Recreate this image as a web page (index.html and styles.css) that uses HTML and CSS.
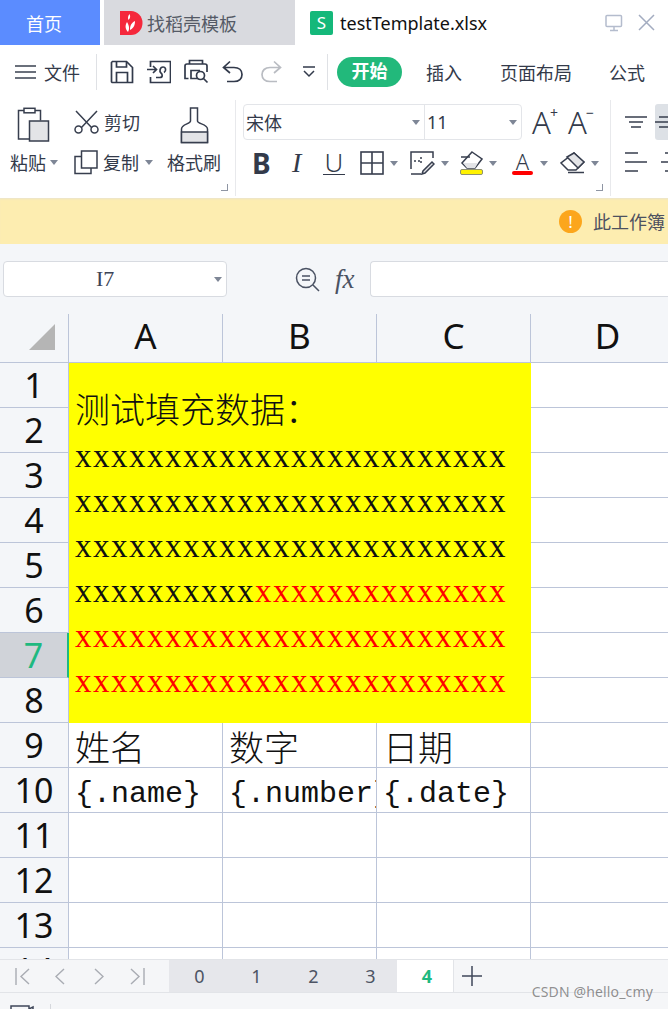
FILE: index.html
```html
<!DOCTYPE html>
<html>
<head>
  <meta charset="utf-8">
  <link rel="stylesheet" href="styles.css">
</head>
<body>
  <div class="app">

    <!-- Window tabs -->
    <div class="titlebar">
      <div class="tab-home">首页</div>
      <div class="tab-docer">
        <svg class="logo" width="23" height="24" viewBox="0 0 23 24"><path d="M0 0h11a11.500 12 0 0 1 0 24H0z" fill="#f5283c"/><path d="M8 21c-3-3-3-7-1-10 2 3 3 7 1 10zM10 19c0-4 1-7 5-9 0 4-1 7-5 9zM8.500 9c-1-2-.5-4 1-6 1 2 1 4-1 6z" fill="#fff"/></svg>
        <span>找稻壳模板</span>
      </div>
      <div class="tab-file">
        <div class="sheet-logo">S</div>
        <span>testTemplate.xlsx</span>
        <svg class="win-btn monitor" width="18" height="18" viewBox="0 0 18 18" fill="none" stroke="#b4bccd" stroke-width="1.500"><rect x="1" y="1.500" width="15.500" height="11" rx="1"/><path d="M9 12.500v4M5 16.500h8"/></svg>
        <svg class="win-btn" width="17" height="17" viewBox="0 0 17 17" fill="none" stroke="#a3acc0" stroke-width="1.500"><path d="M1 1l15 15M16 1L1 16"/></svg>
      </div>
    </div>

    <!-- Menu row -->
    <div class="menubar">
      <svg class="hamburger" width="21" height="14" viewBox="0 0 21 14" fill="none" stroke="#3a4150" stroke-width="1.500"><path d="M0 1h21M0 7h21M0 13h21"/></svg>
      <span class="menu-file">文件</span>
      <div class="vline"></div>
      <svg class="qa save" width="24" height="24" viewBox="0 0 24 24" fill="none" stroke="#323a4b" stroke-width="1.700"><path d="M2.500 1.500h14l6 6v15h-20a1 1 0 0 1-1-1v-19z"/><path d="M6.500 1.500v5.500h10V2M6.500 22.500v-10h11v10"/></svg>
      <svg class="qa share" width="24" height="24" viewBox="0 0 24 24" fill="none" stroke="#323a4b" stroke-width="1.700"><path d="M3.500 7V1.500h20v21h-20V17"/><path d="M0 9.500h9M6 6l3.500 3.500L6 13"/><path d="M9 17.500h4c3 0 2.500-3.500 1-4.500-2-1.500-1-6 2-6s3.500 4 1 5.500"/></svg>
      <svg class="qa preview" width="25" height="25" viewBox="0 0 25 25" fill="none" stroke="#323a4b" stroke-width="1.700"><path d="M5.500 5V1.500h13V5M4.500 19.500H1V7a2 2 0 0 1 2-2h18a2 2 0 0 1 2 2v6"/><path d="M14 19.500H7v-8h9"/><circle cx="16.500" cy="16.500" r="4"/><path d="M19.500 19.500l4 4"/></svg>
      <svg class="qa undo" width="21" height="24" viewBox="0 0 21 24" fill="none" stroke="#323a4b" stroke-width="1.700"><path d="M8 1.500L1.500 7.500 8 13M1.500 7.500H12c5 0 8 3 8 7s-3 7-8 7H5"/></svg>
      <svg class="qa redo" width="21" height="24" viewBox="0 0 21 24" fill="none" stroke="#b9bcc2" stroke-width="1.700"><path d="M13 1.500l6.500 6L13 13M19.500 7.500H9c-5 0-8 3-8 7s3 7 8 7h7"/></svg>
      <svg class="qa more" width="12" height="12" viewBox="0 0 12 12" fill="none" stroke="#323a4b" stroke-width="1.500"><path d="M0 1h12M1 5l5 5 5-5"/></svg>
      <div class="vline second"></div>
      <span class="pill">开始</span>
      <span class="menu-item insert">插入</span>
      <span class="menu-item layout">页面布局</span>
      <span class="menu-item formula">公式</span>
    </div>

    <!-- Ribbon -->
    <div class="ribbon">
      <div class="group group-clip">
        <div class="col paste">
          <svg width="33" height="36" viewBox="0 0 33 36" fill="none" stroke="#373e4e" stroke-width="1.500"><path d="M12 31.500H1.500V3h22v10"/><rect x="7" y="0.800" width="11" height="4.500" fill="#fff"/><rect x="12.500" y="13.500" width="19" height="20" fill="#e3e4e7"/></svg>
          <div class="label">粘贴<i class="caret"></i></div>
        </div>
        <div class="col cutcopy">
          <div class="tool">
            <svg width="25" height="24" viewBox="0 0 25 24" fill="none" stroke="#373e4e" stroke-width="1.500"><path d="M2 1l16 17M23 1L7 18"/><circle cx="4.500" cy="19.500" r="3.500"/><circle cx="20.500" cy="19.500" r="3.500"/></svg>
            <span>剪切</span>
          </div>
          <div class="tool">
            <svg width="24" height="25" viewBox="0 0 24 25" fill="none" stroke="#373e4e" stroke-width="1.500"><path d="M7.500 6.500h-6.500v17h16v-6"/><path d="M7.500 1h15.500v17h-15.500z" fill="#fff"/></svg>
            <span>复制</span><i class="caret"></i>
          </div>
        </div>
        <div class="col brush">
          <svg width="29" height="37" viewBox="0 0 29 37" fill="none" stroke="#373e4e" stroke-width="1.500"><path d="M10.500 1h7v13c0 3 10 3 10 8v13.500H1.500V22c0-5 9-5 9-8z"/><path d="M1.500 25h26v10.500h-26z" fill="#e3e4e7"/></svg>
          <div class="label">格式刷</div>
        </div>
        <i class="corner"></i>
      </div>

      <div class="group group-font">
        <div class="font-row">
          <div class="selects">
            <div class="select font-name"><span>宋体</span><i class="caret"></i></div>
            <div class="select font-size"><span>11</span><i class="caret"></i></div>
          </div>
          <div class="grow-a">A<sup>+</sup></div>
          <div class="grow-a shrink">A<sup>−</sup></div>
        </div>
        <div class="fmt-row">
          <div class="fmt fmt-b">B</div>
          <div class="fmt fmt-i">I</div>
          <div class="fmt fmt-u"><span>U</span></div>
          <div class="fmt">
            <svg width="24" height="24" viewBox="0 0 24 24" fill="none" stroke="#373e4e" stroke-width="1.600"><rect x="1" y="1" width="22" height="22"/><path d="M12 1v22M1 12h22"/></svg>
            <i class="caret"></i>
          </div>
          <div class="fmt">
            <svg width="25" height="24" viewBox="0 0 25 24" fill="none" stroke="#373e4e" stroke-width="1.500"><path d="M1 18V1h22v6M1 23h10"/><path d="M4 10h8M11 6v8" stroke-dasharray="2 2"/><path d="M13 20l-1 3 3-1 9-9-2-2z" fill="#e3e4e7"/></svg>
            <i class="caret"></i>
          </div>
          <div class="fmt">
            <div class="fill-icon">
              <svg width="23" height="18" viewBox="0 0 23 18" fill="none" stroke="#373e4e" stroke-width="1.500"><path d="M12 1l10 7-7 9H7L2 12z" fill="#fff"/><path d="M3 12l15 0-3 5H7z" fill="#e3e4e7" stroke="none"/><path d="M1 6h9"/></svg>
              <div class="fill-bar"></div>
            </div>
            <i class="caret"></i>
          </div>
          <div class="fmt">
            <div class="color-a"><span>A</span><div class="color-bar"></div></div>
            <i class="caret"></i>
          </div>
          <div class="fmt">
            <svg width="25" height="22" viewBox="0 0 25 22" fill="none" stroke="#373e4e" stroke-width="1.500"><path d="M14 1l10 9-8 8H8l-7-7z"/><path d="M7 5l11 11 6-6-10-9z" fill="#e3e4e7"/><path d="M8 20.500h16"/></svg>
            <i class="caret"></i>
          </div>
        </div>
        <i class="corner"></i>
      </div>

      <div class="group group-align">
        <div class="align-row">
          <svg width="22" height="12" viewBox="0 0 22 12" fill="none" stroke="#373e4e" stroke-width="1.500"><path d="M0 1h22M4 6h14M6 11h10"/></svg>
          <div class="align-active">
            <svg width="13" height="12" viewBox="0 0 13 12" fill="none" stroke="#373e4e" stroke-width="1.500"><path d="M4 1h9M0 6h13M4 11h9"/></svg>
          </div>
        </div>
        <div class="align-row second">
          <svg width="22" height="20" viewBox="0 0 22 20" fill="none" stroke="#373e4e" stroke-width="1.500"><path d="M0 1h13M0 10h22M0 19h13"/></svg>
          <svg class="align-center" width="8" height="20" viewBox="0 0 8 20" fill="none" stroke="#373e4e" stroke-width="1.500"><path d="M4 1h4M0 10h8M4 19h4"/></svg>
        </div>
      </div>
    </div>

    <!-- Notice -->
    <div class="notice">
      <div class="warn">!</div>
      <span>此工作簿</span>
    </div>

    <!-- Name box and formula input -->
    <div class="formula-bar">
      <div class="name-box"><span>I7</span><i class="caret"></i></div>
      <svg class="zoom-icon" width="25" height="25" viewBox="0 0 25 25" fill="none" stroke="#4a5263" stroke-width="1.500"><circle cx="11" cy="11" r="9.500"/><path d="M7 9h8M7 13h8M18 18l6 6"/></svg>
      <span class="fx">fx</span>
      <div class="formula-input"></div>
    </div>

    <!-- Sheet -->
    <div class="sheet">
      <div class="corner-cell"><i class="select-all"></i></div>
      <div class="col-head">A</div>
      <div class="col-head">B</div>
      <div class="col-head">C</div>
      <div class="col-head">D</div>

      <div class="row-head">1</div>
      <div class="merged">
        <div class="merged-title">测试填充数据：</div>
        <div class="x-line">xxxxxxxxxxxxxxxxxxxxxxxx</div>
        <div class="x-line">xxxxxxxxxxxxxxxxxxxxxxxx</div>
        <div class="x-line">xxxxxxxxxxxxxxxxxxxxxxxx</div>
        <div class="x-line">xxxxxxxxxx<span class="red">xxxxxxxxxxxxxx</span></div>
        <div class="x-line red">xxxxxxxxxxxxxxxxxxxxxxxx</div>
        <div class="x-line red">xxxxxxxxxxxxxxxxxxxxxxxx</div>
      </div>
      <div class="cell"></div>

      <div class="row-head">2</div><div class="cell"></div>
      <div class="row-head">3</div><div class="cell"></div>
      <div class="row-head">4</div><div class="cell"></div>
      <div class="row-head">5</div><div class="cell"></div>
      <div class="row-head">6</div><div class="cell"></div>
      <div class="row-head active">7</div><div class="cell"></div>
      <div class="row-head">8</div><div class="cell"></div>

      <div class="row-head">9</div>
      <div class="cell cjk">姓名</div>
      <div class="cell cjk">数字</div>
      <div class="cell cjk">日期</div>
      <div class="cell"></div>

      <div class="row-head">10</div>
      <div class="cell mono">{.name}</div>
      <div class="cell mono">{.number}</div>
      <div class="cell mono">{.date}</div>
      <div class="cell"></div>

      <div class="row-head">11</div><div class="cell"></div><div class="cell"></div><div class="cell"></div><div class="cell"></div>
      <div class="row-head">12</div><div class="cell"></div><div class="cell"></div><div class="cell"></div><div class="cell"></div>
      <div class="row-head">13</div><div class="cell"></div><div class="cell"></div><div class="cell"></div><div class="cell"></div>
      <div class="row-head">14</div><div class="cell"></div><div class="cell"></div><div class="cell"></div><div class="cell"></div>
    </div>

    <!-- Sheet tabs -->
    <div class="sheet-tabs">
      <div class="nav">
        <svg width="15" height="17" viewBox="0 0 15 17" fill="none" stroke="#a9acb3" stroke-width="1.400"><path d="M1 0v17M14 1L6 8.500 14 16"/></svg>
        <svg width="10" height="17" viewBox="0 0 10 17" fill="none" stroke="#a9acb3" stroke-width="1.400"><path d="M9 1L1 8.500 9 16"/></svg>
        <svg width="10" height="17" viewBox="0 0 10 17" fill="none" stroke="#a9acb3" stroke-width="1.400"><path d="M1 1l8 7.500L1 16"/></svg>
        <svg width="15" height="17" viewBox="0 0 15 17" fill="none" stroke="#a9acb3" stroke-width="1.400"><path d="M14 0v17M1 1l8 7.500L1 16"/></svg>
      </div>
      <div class="sheet-tab">0</div>
      <div class="sheet-tab">1</div>
      <div class="sheet-tab">2</div>
      <div class="sheet-tab">3</div>
      <div class="sheet-tab current">4</div>
      <svg class="add-sheet" width="20" height="20" viewBox="0 0 20 20" fill="none" stroke="#3f4759" stroke-width="1.500"><path d="M10 0v20M0 10h20"/></svg>
    </div>

    <!-- Status bar -->
    <div class="statusbar">
      <svg width="24" height="17" viewBox="0 0 24 17" fill="none" stroke="#3f4759" stroke-width="1.500"><path d="M1 17V2h18v15M19 5l4-2v14"/></svg>
      <div class="status-line"></div>
    </div>

    <div class="watermark">CSDN @hello_cmy</div>
  </div>
</body>
</html>
```

FILE: styles.css
```css
* {
  box-sizing: border-box;
  margin: 0;
  padding: 0;
}

body {
  width: 668px;
  height: 1009px;
  overflow: hidden;
  font-family: "Noto Sans", "Noto Sans CJK SC", sans-serif;
  color: #333a4a;
  background: #fff;
}

i {
  font-style: normal;
}

.app {
  position: relative;
  display: flex;
  flex-direction: column;
  height: 1009px;
  overflow: hidden;
}

/* Window tabs */
.titlebar {
  display: flex;
  height: 45px;
  font-size: 18px;
  flex-shrink: 0;
}

.tab-home {
  width: 100px;
  background: #5b8cff;
  color: #fff;
  display: flex;
  align-items: center;
  padding-left: 26px;
  font-size: 18px;
}

.tab-docer {
  width: 191px;
  margin-left: 4px;
  background: #d9dadf;
  color: #555a66;
  display: flex;
  align-items: center;
  padding-left: 16px;
  gap: 4px;
}

.tab-file {
  flex: 1;
  display: flex;
  align-items: center;
  padding-left: 15px;
  color: #111;
}

.sheet-logo {
  width: 23px;
  height: 24px;
  background: #14b87a;
  border-radius: 2px;
  color: #fff;
  font-size: 17px;
  line-height: 24px;
  text-align: center;
  margin-right: 7px;
}

.win-btn {
  margin-left: 15px;
}

.monitor {
  margin-left: 118px;
}

/* Menu row */
.menubar {
  display: flex;
  align-items: center;
  height: 55px;
  padding-left: 15px;
  font-size: 18px;
  flex-shrink: 0;
}

.menubar > * {
  margin-bottom: 2px;
}

.menu-file {
  margin-left: 8px;
}

.vline {
  width: 1px;
  height: 36px;
  background: #dfe1e5;
  margin-left: 16px;
}

.vline.second {
  margin-left: 12px;
}

.save { margin-left: 13px; }
.share { margin-left: 13px; }
.preview { margin-left: 13px; }
.undo { margin-left: 13px; }
.redo { margin-left: 18px; }
.more { margin-left: 21px; }

.pill {
  margin-left: 9px;
  width: 65px;
  height: 30px;
  border-radius: 15px;
  background: #22b97b;
  color: #fff;
  font-weight: 700;
  text-align: center;
  line-height: 29px;
}

.insert { margin-left: 24px; }
.layout { margin-left: 38px; }
.formula { margin-left: 37px; }

/* Ribbon */
.ribbon {
  display: flex;
  height: 98px;
  flex-shrink: 0;
  overflow: hidden;
  font-size: 18px;
}

.group {
  position: relative;
  flex-shrink: 0;
  border-right: 1px solid #e8e9ec;
  margin-bottom: 2px;
}

.group-clip {
  width: 236px;
  display: flex;
  padding-left: 10px;
}

.col {
  display: flex;
  flex-direction: column;
}

.paste {
  width: 47px;
  align-items: center;
  padding-top: 7px;
}

.paste svg, .brush svg {
  height: 37px;
}

.label {
  display: flex;
  align-items: center;
  gap: 4px;
  height: 26px;
  margin-top: 5px;
  white-space: nowrap;
}

.paste .label {
  align-self: flex-start;
}

.cutcopy {
  width: 79px;
  margin-left: 17px;
  padding-top: 10px;
  gap: 16px;
}

.tool {
  display: flex;
  align-items: center;
  gap: 5px;
  height: 24px;
  white-space: nowrap;
}

.tool .caret {
  margin-left: 1px;
}

.brush {
  margin-left: 14px;
  align-items: center;
  padding-top: 7px;
}

.caret {
  display: inline-block;
  width: 0;
  height: 0;
  border-left: 4px solid transparent;
  border-right: 4px solid transparent;
  border-top: 5px solid #7e8696;
}

.corner {
  position: absolute;
  right: 7px;
  bottom: 5px;
  width: 7px;
  height: 7px;
  border-right: 1px solid #8e95a3;
  border-bottom: 1px solid #8e95a3;
}

.group-font {
  width: 375px;
  padding: 4px 0 0 7px;
}

.font-row {
  display: flex;
  align-items: center;
  height: 36px;
}

.selects {
  display: flex;
  width: 279px;
  height: 36px;
  border: 1px solid #e3e5e9;
  border-radius: 4px;
}

.select {
  display: flex;
  align-items: center;
  justify-content: space-between;
  padding: 0 4px 0 2px;
}

.font-name {
  width: 181px;
  border-right: 1px solid #e3e5e9;
}

.font-size {
  flex: 1;
}

.grow-a {
  font-size: 31px;
  font-weight: 300;
  line-height: 36px;
  margin-left: 10px;
  width: 24px;
  position: relative;
}

.grow-a.shrink {
  margin-left: 12px;
}

.grow-a sup {
  position: absolute;
  left: 18px;
  top: -9px;
  font-size: 14px;
  font-weight: 400;
}

.fmt-row {
  display: grid;
  grid-template-columns: 40px 31px 37px 50px 50px 51px 49px 1fr;
  align-items: center;
  height: 36px;
  margin-top: 4px;
  padding-left: 9px;
}

.fmt {
  display: flex;
  align-items: center;
  gap: 6px;
}

.fmt-b {
  font-size: 28px;
  font-weight: 700;
}

.fmt-i {
  font-family: "Liberation Serif", serif;
  font-style: italic;
  font-size: 28px;
}

.fmt-u span {
  display: block;
  font-size: 26px;
  line-height: 23px;
  border-bottom: 1.500px solid #333a4a;
  width: 22px;
  text-align: center;
  font-weight: 300;
}

.fill-icon, .color-a {
  display: flex;
  flex-direction: column;
  align-items: center;
  width: 23px;
}

.fill-bar {
  width: 23px;
  height: 6px;
  background: #fff200;
  border: 1px solid #8f9170;
  border-radius: 2px;
}

.color-a span {
  font-size: 22px;
  font-weight: 300;
  line-height: 20px;
}

.color-bar {
  width: 21px;
  height: 4px;
  background: #f00;
  border-radius: 2px;
}

.group-align {
  width: 60px;
  border-right: none;
  padding: 4px 0 0 14px;
}

.align-row {
  display: flex;
  align-items: center;
  gap: 8px;
  height: 36px;
}

.align-row.second {
  margin-top: 4px;
}

.align-active {
  flex-shrink: 0;
  display: flex;
  align-items: center;
  justify-content: flex-end;
  width: 13px;
  height: 36px;
  background: #dde1e6;
  border-radius: 3px 0 0 3px;
}

.align-center {
  margin-left: 6px;
}

/* Notice */
.notice {
  display: flex;
  align-items: center;
  height: 46px;
  flex-shrink: 0;
  background: #fdedb0;
  box-shadow: inset 0 2px 2px -1px #e9e4cf;
  padding-left: 559px;
  white-space: nowrap;
  overflow: hidden;
  font-size: 18px;
  color: #4d5160;
}

.warn {
  width: 23px;
  height: 23px;
  border-radius: 50%;
  background: #fca61c;
  color: #fff;
  font-size: 17px;
  line-height: 23px;
  text-align: center;
  margin-right: 11px;
  flex-shrink: 0;
}

/* Name box and formula input */
.formula-bar {
  display: flex;
  align-items: center;
  height: 70px;
  flex-shrink: 0;
  background: #f4f6f9;
  padding: 0 0 0 3px;
}

.name-box {
  display: flex;
  align-items: center;
  width: 224px;
  height: 36px;
  background: #fff;
  border: 1px solid #d8dbe1;
  border-radius: 4px;
  padding: 0 4px 0 92px;
  font-family: "Liberation Serif", serif;
  font-size: 22px;
  color: #3c4356;
  justify-content: space-between;
}

.zoom-icon {
  margin-left: 68px;
}

.fx {
  font-family: "Liberation Serif", serif;
  font-style: italic;
  font-size: 27px;
  color: #4a5263;
  margin-left: 15px;
  width: 35px;
  line-height: 36px;
}

.formula-input {
  flex: 1;
  height: 36px;
  background: #fff;
  border: 1px solid #d8dbe1;
  border-right: none;
  border-radius: 4px 0 0 4px;
}

/* Sheet */
.sheet {
  display: grid;
  grid-template-columns: 69px 154px 154px 154px 154px;
  grid-template-rows: 49px repeat(14, 45px);
  height: 645px;
  flex-shrink: 0;
  overflow: hidden;
  background: #fff;
}

.corner-cell {
  display: flex;
  justify-content: flex-end;
  padding: 10px 13px 0 0;
  background: #f4f6f9;
  border-right: 1px solid #bcc5d9;
  border-bottom: 1px solid #bcc5d9;
}

.select-all {
  width: 26px;
  height: 26px;
  background: #b5b5b5;
  clip-path: polygon(100% 0, 100% 100%, 0 100%);
}

.col-head {
  background: #f4f6f9;
  border-right: 1px solid #bcc5d9;
  border-bottom: 1px solid #bcc5d9;
  color: #111;
  font-size: 35px;
  line-height: 43px;
  text-align: center;
}

.row-head {
  grid-column: 1;
  background: #f4f6f9;
  border-right: 1px solid #bcc5d9;
  border-bottom: 1px solid #bcc5d9;
  color: #111;
  font-size: 34px;
  line-height: 45px;
  text-align: center;
}

.row-head.active {
  background: #d0d3d9;
  color: #1fb980;
  border-right: 2px solid #1fb980;
}

.cell {
  border-right: 1px solid #bcc5d9;
  border-bottom: 1px solid #bcc5d9;
  overflow: hidden;
  white-space: nowrap;
  padding-left: 6px;
  color: #111;
}

.merged {
  grid-column: 2 / 5;
  grid-row: 2 / 10;
  background: #ff0;
  padding: 23px 0 0 6px;
  overflow: hidden;
  color: #111;
}

.merged-title {
  font-size: 35px;
  font-weight: 300;
  line-height: 48px;
  height: 48px;
}

.x-line {
  font-family: "Liberation Serif", serif;
  font-size: 33px;
  letter-spacing: 1.500px;
  line-height: 45px;
  height: 45px;
  white-space: nowrap;
}

.red {
  color: #f00;
}

.cjk {
  font-size: 35px;
  font-weight: 300;
  line-height: 50px;
}

.mono {
  font-family: "Liberation Mono", monospace;
  font-size: 30px;
  line-height: 53px;
}

/* Sheet tabs */
.sheet-tabs {
  display: flex;
  align-items: center;
  height: 34px;
  flex-shrink: 0;
  background: #f5f6f8;
  border-top: 1px solid #e2e4e8;
  border-bottom: 1px solid #e2e4e8;
}

.nav {
  display: flex;
  align-items: center;
  width: 169px;
  padding-left: 15px;
  gap: 25px;
}

.nav svg:nth-child(3) {
  margin-left: 4px;
}

.nav svg:nth-child(4) {
  margin-left: 1px;
}

.sheet-tab {
  width: 57px;
  height: 32px;
  background: #e6e7eb;
  color: #4d5464;
  font-size: 18px;
  line-height: 32px;
  text-align: center;
  padding-left: 4px;
}

.sheet-tab.current {
  background: #fff;
  color: #1fb980;
  font-weight: 700;
  border-right: 1px solid #e2e4e8;
}

.add-sheet {
  margin-left: 8px;
}

/* Status bar */
.statusbar {
  display: flex;
  align-items: flex-start;
  flex: 1;
  background: #f5f6f8;
  padding: 11px 0 0 10px;
}

.status-line {
  width: 1px;
  height: 10px;
  background: #d5d7dc;
  margin-left: 16px;
}

.watermark {
  position: absolute;
  right: 15px;
  top: 982px;
  font-size: 14px;
  letter-spacing: 0.150px;
  color: rgba(85, 85, 85, 0.65);
}
```
